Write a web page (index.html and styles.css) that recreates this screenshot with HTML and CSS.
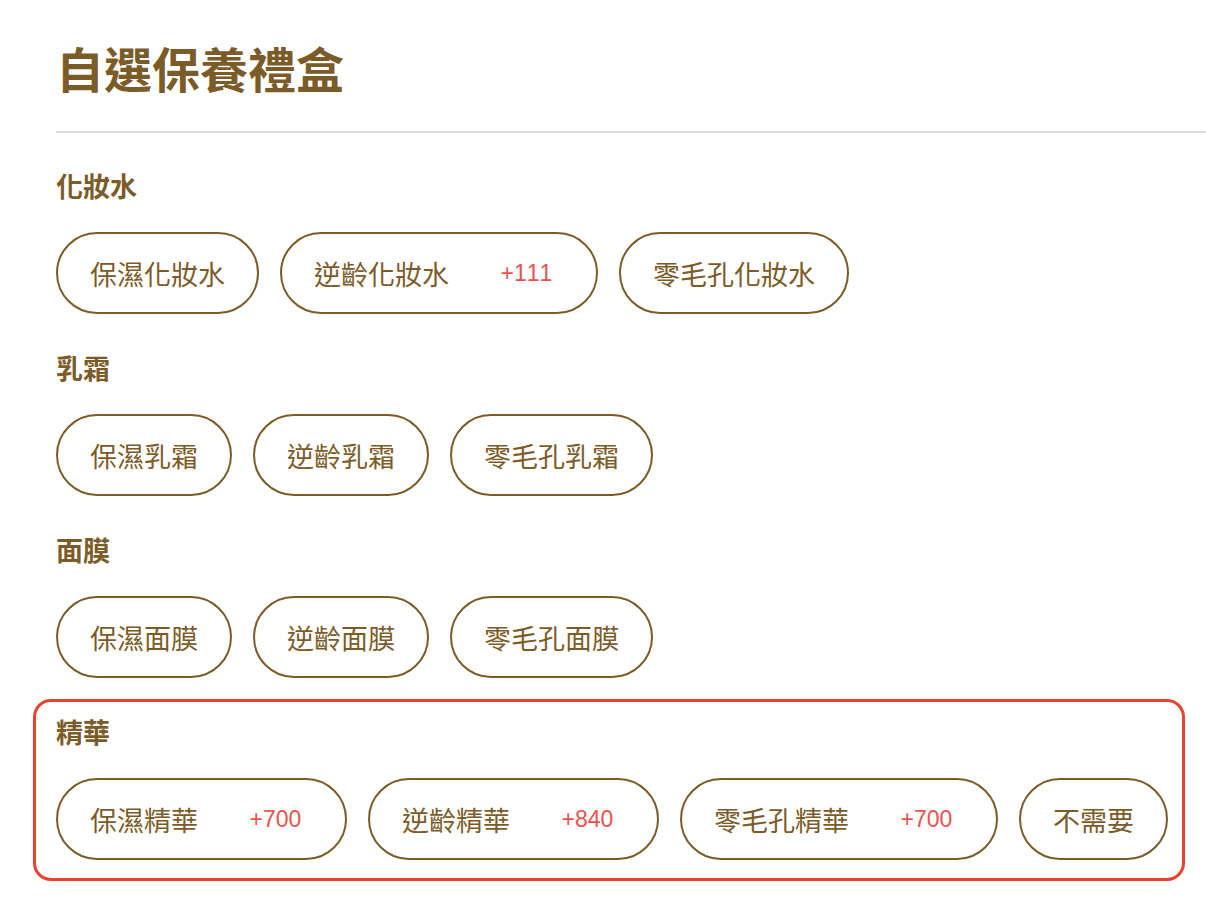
FILE: index.html
```html
<!DOCTYPE html>
<html lang="zh-Hant">
<head>
<meta charset="UTF-8">
<title>自選保養禮盒</title>
<link rel="stylesheet" href="styles.css">
</head>
<body>

<div class="gift-box">
    <h1 class="title">自選保養禮盒</h1>
    <hr class="divider">

    <div class="group">
        <h2>化妝水</h2>
        <div class="options">
            <button class="option">保濕化妝水</button>
            <button class="option">逆齡化妝水<span class="price">+111</span></button>
            <button class="option">零毛孔化妝水</button>
        </div>
    </div>

    <div class="group">
        <h2>乳霜</h2>
        <div class="options">
            <button class="option">保濕乳霜</button>
            <button class="option">逆齡乳霜</button>
            <button class="option">零毛孔乳霜</button>
        </div>
    </div>

    <div class="group">
        <h2>面膜</h2>
        <div class="options">
            <button class="option">保濕面膜</button>
            <button class="option">逆齡面膜</button>
            <button class="option">零毛孔面膜</button>
        </div>
    </div>

    <div class="group highlight">
        <h2>精華</h2>
        <div class="options">
            <button class="option">保濕精華<span class="price">+700</span></button>
            <button class="option">逆齡精華<span class="price">+840</span></button>
            <button class="option">零毛孔精華<span class="price">+700</span></button>
            <button class="option">不需要</button>
        </div>
    </div>
</div>

</body>
</html>
```

FILE: styles.css
```css
body {
    margin: 0;
    background: #fff;
    font-family: "Noto Sans CJK TC", "Noto Sans", sans-serif;
    color: #7b5c28;
    overflow: hidden;
}
.gift-box {
    padding-top: 37px;
}
.title {
    margin: 0 0 34px 56px;
    font-size: 48px;
    line-height: 60px;
    font-weight: 700;
}
.divider {
    margin: 0 0 20px 56px;
    border: none;
    height: 2px;
    background: #dcdcdc;
}
.group {
    margin: 0 21px 0 33px;
    padding: 12px 20px 18px;
    border: 3px solid transparent;
    border-radius: 18px;
}
.group.highlight {
    border-color: #e8432f;
}
.group h2 {
    margin: 0 0 28px;
    font-size: 27px;
    line-height: 36px;
    font-weight: 700;
}
.options {
    display: flex;
    gap: 21px;
}
.option {
    box-sizing: border-box;
    flex-shrink: 0;
    height: 82px;
    padding: 0 32px;
    display: flex;
    align-items: center;
    white-space: nowrap;
    background: #fff;
    border: 2px solid #7b5c28;
    border-radius: 41px;
    color: #7b5c28;
    font-family: inherit;
    font-size: 27px;
    cursor: pointer;
}
.price {
    display: inline-block;
    min-width: 53px;
    margin: 0 11px 0 51px;
    font-family: "Liberation Sans", Arial, sans-serif;
    font-size: 23px;
    font-kerning: none;
    color: #e9524f;
}
```
